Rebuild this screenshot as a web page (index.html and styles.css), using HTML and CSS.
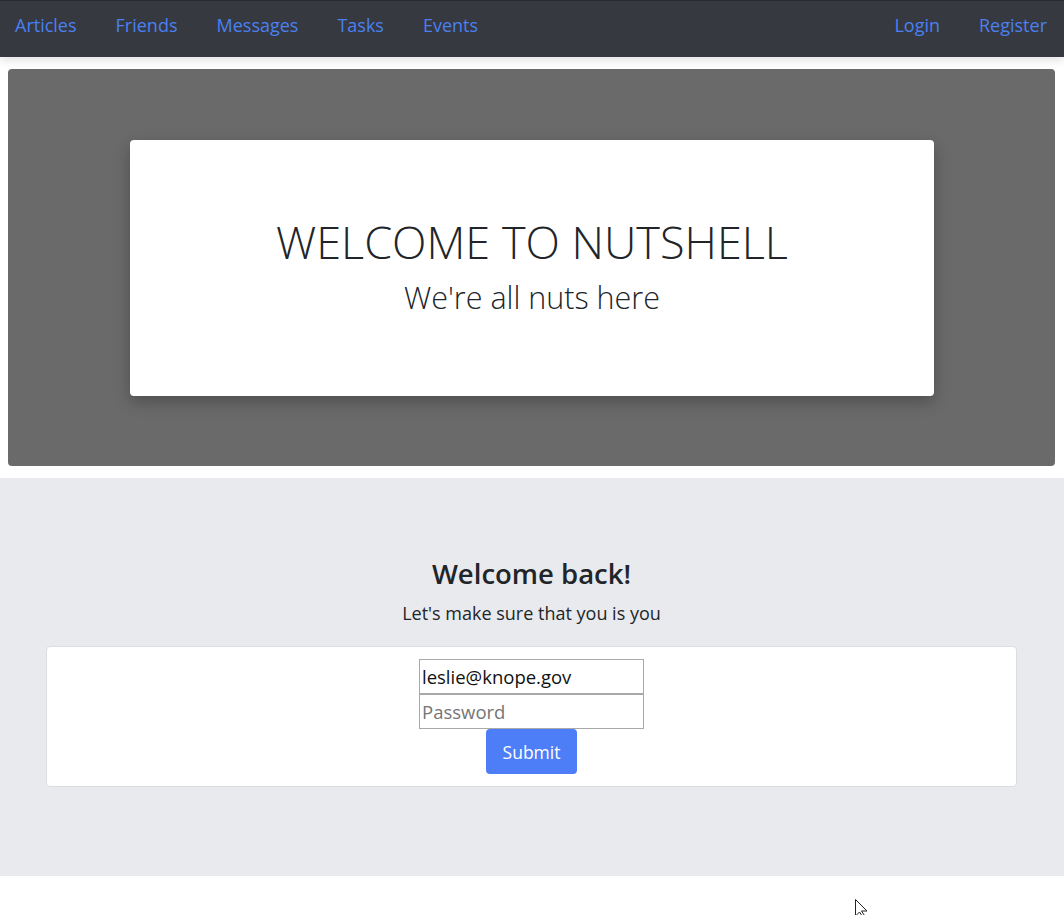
FILE: index.html
```html
<!DOCTYPE html>
<html lang="en">
<head>
<meta charset="utf-8">
<title>Nutshell</title>
<link rel="stylesheet" href="styles.css">
</head>
<body>
<nav class="navbar">
  <ul class="nav-left">
    <li><a href="#">Articles</a></li>
    <li><a href="#">Friends</a></li>
    <li><a href="#">Messages</a></li>
    <li><a href="#">Tasks</a></li>
    <li><a href="#">Events</a></li>
  </ul>
  <ul class="nav-right">
    <li><a href="#">Login</a></li>
    <li><a href="#">Register</a></li>
  </ul>
</nav>
<main>
  <section class="hero">
    <div class="hero-card">
      <h1 class="hero-title">WELCOME TO NUTSHELL</h1>
      <p class="hero-sub">We're all nuts here</p>
    </div>
  </section>
  <section class="login">
    <h2 class="login-title">Welcome back!</h2>
    <p class="login-sub">Let's make sure that you is you</p>
    <form class="login-card">
      <input class="field" type="email" value="leslie@knope.gov">
      <input class="field" type="password" placeholder="Password">
      <button class="btn" type="button">Submit</button>
    </form>
  </section>
</main>
<svg class="cursor" width="14" height="18" viewBox="0 0 14 18"><path d="M0.5 0.5 L0.5 17 L4.5 13 L7.5 17.5 L9.5 16.5 L6.5 12 L12 12 Z" fill="#fff" stroke="#222" stroke-width="1"/></svg>
</body>
</html>
```
FILE: styles.css
```css
* { box-sizing: border-box; }
html, body { margin: 0; padding: 0; }
body {
  font-family: "Open Sans", "Noto Sans", sans-serif;
  color: #212529;
  background: #fff;
  position: relative;
  min-height: 915px;
}
.navbar {
  height: 57px;
  background: #363940;
  border-top: 1px solid #2a2c31;
  display: flex;
  justify-content: space-between;
  align-items: flex-start;
  padding: 12px 17px 0 15px;
  box-shadow: 0 3px 10px rgba(0,0,0,0.12);
  position: relative;
  z-index: 1;
}
.navbar ul {
  list-style: none;
  margin: 0;
  padding: 0;
  display: flex;
  gap: 39px;
}
.navbar a {
  color: #4a80f2;
  text-decoration: none;
  font-size: 18px;
  line-height: 24px;
}
main { padding-top: 12px; }
.hero {
  margin: 0 9px 12px 8px;
  background: #6a6a6a;
  border-radius: 4px;
  height: 397px;
  padding: 71px 121px 0 122px;
}
.hero-card {
  background: #fff;
  border-radius: 4px;
  height: 256px;
  box-shadow: 0 6px 16px rgba(0,0,0,0.25);
  display: flex;
  flex-direction: column;
  align-items: center;
  padding-top: 74px;
}
.hero-title {
  margin: 0;
  font-weight: 300;
  font-size: 45px;
  line-height: 56px;
  color: #212529;
}
.hero-sub {
  margin: 0;
  font-weight: 300;
  font-size: 30.5px;
  line-height: 54px;
}
.login {
  background: #e9eaee;
  height: 398px;
  padding: 78px 47px 0 46px;
  display: flex;
  flex-direction: column;
  align-items: center;
}
.login-title {
  margin: 0;
  font-size: 27.5px;
  font-weight: 600;
  line-height: 36px;
}
.login-sub {
  margin: 8px 0 20px;
  font-size: 18px;
  line-height: 26px;
}
.login-card {
  width: 100%;
  background: #fff;
  border: 1px solid #dcdde0;
  border-radius: 4px;
  padding: 12px 0 12px;
  display: flex;
  flex-direction: column;
  align-items: center;
}
.field {
  width: 225px;
  height: 35px;
  border: 1px solid #a9a9a9;
  margin: 0;
  padding: 0 2px;
  font-family: inherit;
  font-size: 18.5px;
  color: #111;
  background: #fff;
}
.field::placeholder { color: #757575; }
.btn {
  margin-top: 0;
  width: 91px;
  height: 45px;
  background: #4d7ef7;
  color: #fff;
  border: 0;
  border-radius: 4px;
  font-family: inherit;
  font-size: 17.5px;
}
.cursor {
  position: absolute;
  left: 855px;
  top: 899px;
}
```
